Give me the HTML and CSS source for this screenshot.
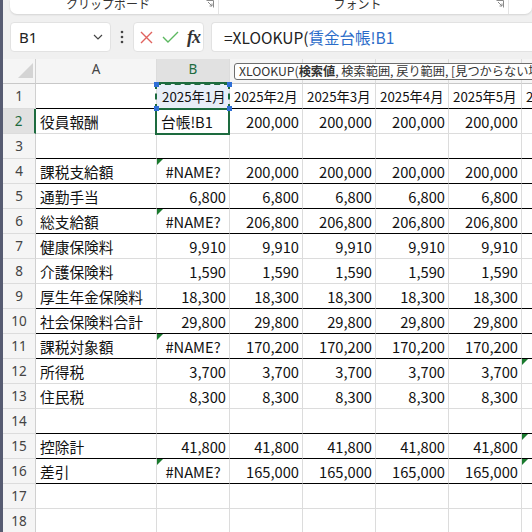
FILE: index.html
```html
<!DOCTYPE html>
<html lang="ja">
<head>
  <meta charset="UTF-8">
  <meta name="viewport" content="width=device-width, initial-scale=1.0">
  <title>賃金台帳</title>
  <link rel="stylesheet" href="styles.css">
</head>
<body>
  <div class="edge"></div>

  <div class="app">
    <div class="ribbon">
      <div class="group group-clip">
        <span class="group-label">クリップボード</span>
        <svg class="launcher" width="8" height="8" viewBox="0 0 8 8"><path d="M0.5 0.5h7v7" fill="none" stroke="#8a8a8a"/><path d="M2 2l4 4M6 3.5v2.5h-2.5" fill="none" stroke="#8a8a8a"/></svg>
      </div>
      <div class="group group-font">
        <span class="group-label">フォント</span>
        <svg class="launcher" width="8" height="8" viewBox="0 0 8 8"><path d="M0.5 0.5h7v7" fill="none" stroke="#8a8a8a"/><path d="M2 2l4 4M6 3.5v2.5h-2.5" fill="none" stroke="#8a8a8a"/></svg>
      </div>
      <div class="group"></div>
    </div>

    <div class="formula-bar">
      <div class="name-box">
        <span>B1</span>
        <svg width="10" height="6" viewBox="0 0 10 6"><path d="M1 1l4 4 4-4" fill="none" stroke="#444" stroke-width="1.2"/></svg>
      </div>
      <svg class="dots" width="4" height="14" viewBox="0 0 4 14"><circle cx="2" cy="2" r="1.3" fill="#444"/><circle cx="2" cy="7" r="1.3" fill="#444"/><circle cx="2" cy="12" r="1.3" fill="#444"/></svg>
      <div class="fx-box">
        <svg width="13" height="13" viewBox="0 0 13 13"><path d="M1 1l11 11M12 1l-11 11" stroke="#e0625e" stroke-width="1.4" fill="none"/></svg>
        <svg class="check" width="17" height="12" viewBox="0 0 17 12"><path d="M1 6l5 5 10-10" stroke="#5cb860" stroke-width="1.4" fill="none"/></svg>
        <span class="fx">fx</span>
      </div>
      <div class="formula-input">=XLOOKUP(<span class="ref-text">賃金台帳!B1</span></div>
    </div>

    <div class="sheet">
      <div class="tooltip">XLOOKUP(<b>検索値</b>, 検索範囲, 戻り範囲, [見つからない場合], [一致モード], [検索モード])</div>

      <div class="row head">
        <div class="rh corner"><span class="select-all"></span></div>
        <div class="c">A</div>
        <div class="c active-col">B</div>
        <div class="c">C</div>
        <div class="c">D</div>
        <div class="c">E</div>
        <div class="c">F</div>
        <div class="c">G</div>
      </div>

      <div class="row rule months">
        <div class="rh">1</div>
        <div class="c"></div>
        <div class="c ref-cell">2025年1月<span class="ants"></span><i class="h tl"></i><i class="h tr"></i><i class="h bl"></i><i class="h br"></i></div>
        <div class="c">2025年2月</div>
        <div class="c">2025年3月</div>
        <div class="c">2025年4月</div>
        <div class="c">2025年5月</div>
        <div class="c">2025年6月</div>
      </div>

      <div class="row">
        <div class="rh active-row">2</div>
        <div class="c">役員報酬</div>
        <div class="c edit-cell">台帳!B1<span class="edit-box"></span></div>
        <div class="c num">200,000</div>
        <div class="c num">200,000</div>
        <div class="c num">200,000</div>
        <div class="c num">200,000</div>
        <div class="c num">200,000</div>
      </div>

      <div class="row rule">
        <div class="rh">3</div>
        <div class="c"></div><div class="c"></div><div class="c"></div><div class="c"></div><div class="c"></div><div class="c"></div><div class="c"></div>
      </div>

      <div class="row rule">
        <div class="rh">4</div>
        <div class="c">課税支給額</div>
        <div class="c err">#NAME?</div>
        <div class="c num">200,000</div>
        <div class="c num">200,000</div>
        <div class="c num">200,000</div>
        <div class="c num">200,000</div>
        <div class="c num">200,000</div>
      </div>

      <div class="row rule">
        <div class="rh">5</div>
        <div class="c">通勤手当</div>
        <div class="c num">6,800</div>
        <div class="c num">6,800</div>
        <div class="c num">6,800</div>
        <div class="c num">6,800</div>
        <div class="c num">6,800</div>
        <div class="c num">6,800</div>
      </div>

      <div class="row rule">
        <div class="rh">6</div>
        <div class="c">総支給額</div>
        <div class="c err">#NAME?</div>
        <div class="c num">206,800</div>
        <div class="c num">206,800</div>
        <div class="c num">206,800</div>
        <div class="c num">206,800</div>
        <div class="c num">206,800</div>
      </div>

      <div class="row">
        <div class="rh">7</div>
        <div class="c">健康保険料</div>
        <div class="c num">9,910</div>
        <div class="c num">9,910</div>
        <div class="c num">9,910</div>
        <div class="c num">9,910</div>
        <div class="c num">9,910</div>
        <div class="c num">9,910</div>
      </div>

      <div class="row">
        <div class="rh">8</div>
        <div class="c">介護保険料</div>
        <div class="c num">1,590</div>
        <div class="c num">1,590</div>
        <div class="c num">1,590</div>
        <div class="c num">1,590</div>
        <div class="c num">1,590</div>
        <div class="c num">1,590</div>
      </div>

      <div class="row rule">
        <div class="rh">9</div>
        <div class="c">厚生年金保険料</div>
        <div class="c num">18,300</div>
        <div class="c num">18,300</div>
        <div class="c num">18,300</div>
        <div class="c num">18,300</div>
        <div class="c num">18,300</div>
        <div class="c num">18,300</div>
      </div>

      <div class="row rule">
        <div class="rh">10</div>
        <div class="c">社会保険料合計</div>
        <div class="c num">29,800</div>
        <div class="c num">29,800</div>
        <div class="c num">29,800</div>
        <div class="c num">29,800</div>
        <div class="c num">29,800</div>
        <div class="c num">29,800</div>
      </div>

      <div class="row rule">
        <div class="rh">11</div>
        <div class="c">課税対象額</div>
        <div class="c err">#NAME?</div>
        <div class="c num">170,200</div>
        <div class="c num">170,200</div>
        <div class="c num">170,200</div>
        <div class="c num">170,200</div>
        <div class="c num">170,200</div>
      </div>

      <div class="row">
        <div class="rh">12</div>
        <div class="c">所得税</div>
        <div class="c num">3,700</div>
        <div class="c num">3,700</div>
        <div class="c num">3,700</div>
        <div class="c num">3,700</div>
        <div class="c num">3,700</div>
        <div class="c num flag">3,700</div>
      </div>

      <div class="row">
        <div class="rh">13</div>
        <div class="c">住民税</div>
        <div class="c num">8,300</div>
        <div class="c num">8,300</div>
        <div class="c num">8,300</div>
        <div class="c num">8,300</div>
        <div class="c num">8,300</div>
        <div class="c num">8,300</div>
      </div>

      <div class="row rule">
        <div class="rh">14</div>
        <div class="c"></div><div class="c"></div><div class="c"></div><div class="c"></div><div class="c"></div><div class="c"></div><div class="c"></div>
      </div>

      <div class="row rule">
        <div class="rh">15</div>
        <div class="c">控除計</div>
        <div class="c num">41,800</div>
        <div class="c num">41,800</div>
        <div class="c num">41,800</div>
        <div class="c num">41,800</div>
        <div class="c num">41,800</div>
        <div class="c num flag">41,800</div>
      </div>

      <div class="row rule">
        <div class="rh">16</div>
        <div class="c">差引</div>
        <div class="c err">#NAME?</div>
        <div class="c num">165,000</div>
        <div class="c num">165,000</div>
        <div class="c num">165,000</div>
        <div class="c num">165,000</div>
        <div class="c num flag">165,000</div>
      </div>

      <div class="row">
        <div class="rh">17</div>
        <div class="c"></div><div class="c"></div><div class="c"></div><div class="c"></div><div class="c"></div><div class="c"></div><div class="c"></div>
      </div>

      <div class="row">
        <div class="rh">18</div>
        <div class="c"></div><div class="c"></div><div class="c"></div><div class="c"></div><div class="c"></div><div class="c"></div><div class="c"></div>
      </div>
    </div>
  </div>
</body>
</html>
```

FILE: styles.css
```css
html,
body {
  margin: 0;
  height: 100%;
  overflow: hidden;
}

body {
  display: flex;
  background-color: #f0f0f0;
  font-family: 'Noto Sans CJK JP', 'Noto Sans', sans-serif;
  color: #111;
}

.edge {
  width: 3px;
  flex-shrink: 0;
  background-color: #575c72;
}

.app {
  flex: 1;
  min-width: 0;
  overflow: hidden;
}

/* ribbon (bottom edge only) */
.ribbon {
  display: flex;
  height: 14px;
  margin-left: 7px;
  background-color: #fff;
  border-radius: 0 0 7px 7px;
  box-shadow: 0 1px 2px rgba(0, 0, 0, 0.12);
  overflow: hidden;
}

.group {
  display: flex;
  align-items: flex-end;
  flex-shrink: 0;
  border-right: 1px solid #e3e3e3;
  position: relative;
}

.group-clip {
  width: 208px;
}

.group-font {
  width: 289px;
}

.group:last-child {
  flex: 1;
  border-right: none;
}

.group-label {
  flex: 1;
  text-align: center;
  font-size: 12px;
  line-height: 12px;
  padding-bottom: 4px;
  color: #333;
  white-space: nowrap;
}

.launcher {
  align-self: flex-start;
  margin: 0 4px 0 0;
}

/* formula bar */
.formula-bar {
  display: flex;
  align-items: center;
  height: 30px;
  margin-top: 8px;
  padding-left: 7px;
}

.name-box,
.fx-box,
.formula-input {
  height: 30px;
  box-sizing: border-box;
  background-color: #fff;
  border: 1px solid #e2e2e2;
  border-radius: 4px;
  display: flex;
  align-items: center;
}

.name-box {
  width: 101px;
  padding: 0 7px 0 8px;
  justify-content: space-between;
  font-family: 'Noto Sans', sans-serif;
  font-size: 15px;
  color: #222;
}

.dots {
  margin: 0 9px 0 9px;
}

.fx-box {
  width: 71px;
  padding: 0 0 0 6px;
}

.check {
  margin-left: 9px;
}

.fx {
  font-family: 'Liberation Serif', serif;
  font-style: italic;
  font-size: 18px;
  font-weight: bold;
  color: #333;
  margin-left: 8px;
  letter-spacing: -1px;
}

.formula-input {
  flex: 1;
  margin-left: 7px;
  padding-left: 12px;
  border-right: none;
  border-radius: 4px 0 0 4px;
  font-size: 15.5px;
  color: #222;
  white-space: nowrap;
}

.ref-text {
  color: #2b6cc9;
}

/* sheet */
.sheet {
  margin-top: 7px;
  position: relative;
  background-color: #fff;
}

.tooltip {
  position: absolute;
  left: 231px;
  top: 4px;
  height: 17px;
  width: 330px;
  box-sizing: border-box;
  padding: 0 4px;
  background-color: #fff;
  border: 1px solid #6e6e6e;
  border-radius: 3px;
  font-size: 12.2px;
  line-height: 15px;
  color: #333;
  white-space: nowrap;
  overflow: hidden;
  z-index: 5;
}

.row {
  display: grid;
  grid-template-columns: 33px 121px 73px 73px 73px 73px 73px 73px;
  height: 25px;
}

.c,
.rh {
  box-sizing: border-box;
  border-right: 1px solid #dcdcdc;
  border-bottom: 1px solid #dcdcdc;
  display: flex;
  align-items: center;
  padding: 0 4px;
  font-size: 14.7px;
  white-space: nowrap;
  overflow: hidden;
  position: relative;
}

.rh {
  justify-content: center;
  background-color: #f5f5f5;
  border-right-color: #d0d0d0;
  font-family: 'Noto Sans', sans-serif;
  font-size: 13.5px;
  color: #444;
  padding: 0;
}

.months .c {
  font-size: 13.3px;
}

.row.rule .c {
  border-bottom-color: #000;
}

.head .c {
  justify-content: center;
  background-color: #f5f5f5;
  border-bottom-color: #c8c8c8;
  font-family: 'Noto Sans', sans-serif;
  font-size: 13.5px;
  color: #444;
  padding-bottom: 4px;
}

.head .rh {
  border-bottom-color: #c8c8c8;
}

.select-all {
  width: 0;
  height: 0;
  border-left: 15px solid transparent;
  border-bottom: 15px solid #d4d4d4;
  margin: 0 0 2px 12px;
}

.head .active-col {
  background-color: #e1e1e1;
  color: #1d6b3f;
  border-bottom: 2px solid #1d6b3f;
}

.rh.active-row {
  background-color: #e1e1e1;
  color: #1d6b3f;
  border-right: 2px solid #1d6b3f;
}

.num {
  justify-content: flex-end;
  padding-right: 3px;
}

.err {
  justify-content: center;
}

.err::before,
.flag::before {
  content: '';
  position: absolute;
  left: 0;
  top: 0;
  border-top: 6px solid #1a7a2e;
  border-right: 6px solid transparent;
}

/* referenced cell B1 */
.ref-cell {
  background-color: #e8eef8;
  overflow: visible;
  padding-left: 5px;
}

.ants {
  position: absolute;
  left: -2px;
  top: -1px;
  right: -1px;
  bottom: -2px;
  border: 2px dashed #1d6b3f;
  z-index: 2;
}

.h {
  position: absolute;
  width: 5px;
  height: 5px;
  background-color: #2f6fd6;
  z-index: 3;
}

.tl { left: -3px; top: -2px; }
.tr { right: -3px; top: -2px; }
.bl { left: -3px; bottom: -3px; }
.br { right: -3px; bottom: -3px; }

/* cell being edited */
.edit-cell {
  overflow: visible;
}

.edit-box {
  position: absolute;
  left: -2px;
  top: -1px;
  right: -1px;
  bottom: -2px;
  border: 2px solid #1d6b3f;
  z-index: 1;
}
```
